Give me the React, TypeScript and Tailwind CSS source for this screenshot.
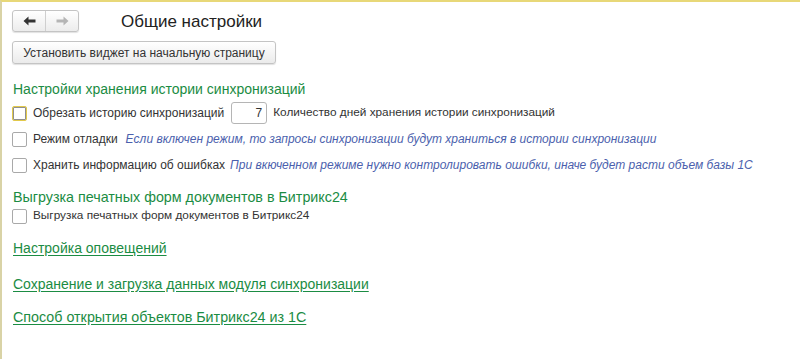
import React from "react";

function Check({ focused = false }: { focused?: boolean }) {
  return (
    <div
      className={
        "w-[15px] h-[15px] shrink-0 rounded-[2px] bg-white " +
        (focused ? "border border-[#e2c94b] shadow-[inset_0_0_0_1px_#8f8f8f]" : "border border-[#a9a9a9]")
      }
    />
  );
}

export default function App() {
  return (
    <div
      className="w-[800px] h-[359px] bg-white border-t-2 border-t-[#e8d878] border-l-2 border-l-[#d9d3a6] overflow-hidden text-[#333]"
      style={{ fontFamily: "Arial, 'Liberation Sans', sans-serif" }}
    >
      <div className="pl-[10px] pt-[8px]">
        <div className="flex items-center h-[22px]">
          <div className="flex h-[22px] w-[67px] rounded-[3px] border border-[#c4c4c4] bg-gradient-to-b from-white to-[#ececec] shadow-[0_1px_1px_rgba(0,0,0,0.12)]">
            <div className="flex-1 flex items-center justify-center border-r border-[#cfcfcf]">
              <svg width="13" height="10" viewBox="0 0 13 10">
                <path d="M0.5 5 L5.5 0.5 L5.5 3.6 L12.5 3.6 L12.5 6.4 L5.5 6.4 L5.5 9.5 Z" fill="#333" />
              </svg>
            </div>
            <div className="flex-1 flex items-center justify-center">
              <svg width="13" height="10" viewBox="0 0 13 10">
                <path d="M12.5 5 L7.5 0.5 L7.5 3.6 L0.5 3.6 L0.5 6.4 L7.5 6.4 L7.5 9.5 Z" fill="#b5b5b5" />
              </svg>
            </div>
          </div>
          <div className="ml-[42px] text-[17px] text-[#222] leading-none">Общие настройки</div>
        </div>

        <div className="mt-[9px] flex">
          <div className="h-[23px] w-[264px] justify-center flex items-center rounded-[3px] border border-[#c4c4c4] bg-gradient-to-b from-white to-[#ebebeb] shadow-[0_1px_1px_rgba(0,0,0,0.12)] text-[12px] text-[#333]">
            Установить виджет на начальную страницу
          </div>
        </div>

        <div className="mt-[16px] pl-[1px] text-[14px] text-[#1b8c43] leading-[18px]">
          Настройки хранения истории синхронизаций
        </div>

        <div className="mt-[4px] flex items-center h-[22px]">
          <Check focused />
          <span className="ml-[6px] text-[12px]">Обрезать историю синхронизаций</span>
          <div className="ml-[7px] w-[36px] h-[22px] rounded-[3px] border border-[#b5b5b5] bg-white flex items-center justify-end pr-[4px] text-[12px]">
            7
          </div>
          <span className="ml-[6px] text-[11.8px]">Количество дней хранения истории синхронизаций</span>
        </div>

        <div className="mt-[6px] flex items-center h-[18px]">
          <Check />
          <span className="ml-[6px] text-[12px]">Режим отладки</span>
          <span className="ml-[8px] text-[12px] italic text-[#4b5fad]">
            Если включен режим, то запросы синхронизации будут храниться в истории синхронизации
          </span>
        </div>

        <div className="mt-[8px] flex items-center h-[18px]">
          <Check />
          <span className="ml-[6px] text-[12px]">Хранить информацию об ошибках</span>
          <span className="ml-[5px] text-[12px] italic text-[#4b5fad]">
            При вкюченном режиме нужно контролировать ошибки, иначе будет расти объем базы 1С
          </span>
        </div>

        <div className="mt-[14px] pl-[1px] text-[14.3px] text-[#1b8c43] leading-[18px]">
          Выгрузка печатных форм документов в Битрикс24
        </div>

        <div className="mt-[1px] flex items-center h-[18px]">
          <Check />
          <span className="ml-[6px] text-[11.8px]">Выгрузка печатных форм документов в Битрикс24</span>
        </div>

        <div className="mt-[14px] pl-[1px] text-[14px] text-[#1b8c43] leading-[18px] underline underline-offset-[2px]">
          Настройка оповещений
        </div>
        <div className="mt-[18px] pl-[1px] text-[14px] text-[#1b8c43] leading-[18px] underline underline-offset-[2px]">
          Сохранение и загрузка данных модуля синхронизации
        </div>
        <div className="mt-[15px] pl-[1px] text-[14.3px] text-[#1b8c43] leading-[18px] underline underline-offset-[2px]">
          Способ открытия объектов Битрикс24 из 1С
        </div>
      </div>
    </div>
  );
}
